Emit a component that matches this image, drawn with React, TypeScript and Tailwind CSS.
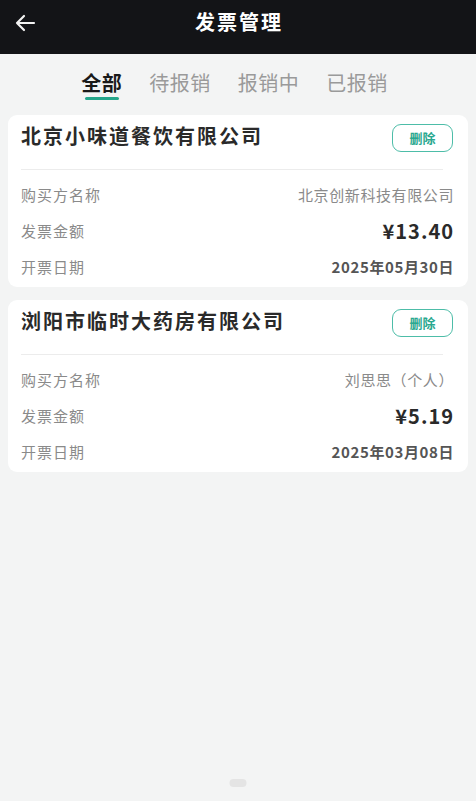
import React from "react";

const font = { fontFamily: '"Noto Sans CJK SC", "Noto Sans", sans-serif' };

type Invoice = { seller: string; buyer: string; amount: string; date: string };

const invoices: Invoice[] = [
  { seller: "北京小味道餐饮有限公司", buyer: "北京创新科技有限公司", amount: "¥13.40", date: "2025年05月30日" },
  { seller: "浏阳市临时大药房有限公司", buyer: "刘思思（个人）", amount: "¥5.19", date: "2025年03月08日" },
];

function Card({ inv }: { inv: Invoice }) {
  return (
    <div className="bg-white rounded-[9px] px-[13px] pt-[9px] pb-[9px]">
      <div className="flex items-start justify-between">
        <div className="text-[20px] font-bold text-[#2a2a2a] -mt-[2px] leading-[28px] tracking-[2px]">{inv.seller}</div>
        <button className="w-[61px] h-[28px] rounded-[9px] border-[1.5px] border-[#4dbda8] text-[#2aa88f] text-[13px] font-bold flex items-center justify-center mr-[2px]">
          删除
        </button>
      </div>
      <div className="h-px bg-[#ececec] mr-[12px] mt-[17px]" />
      <div className="flex flex-col pr-[1px] mt-[14px] gap-[14px]">
        <div className="flex items-center justify-between h-[22px]">
          <span className="text-[15px] text-[#8a8a8a] tracking-[1px]">购买方名称</span>
          <span className="text-[15px] text-[#8a8a8a] tracking-[0.6px]">{inv.buyer}</span>
        </div>
        <div className="flex items-center justify-between h-[22px]">
          <span className="text-[15px] text-[#8a8a8a] tracking-[1px]">发票金额</span>
          <span className="text-[20px] font-bold text-[#2a2a2a] tracking-[1px]">{inv.amount}</span>
        </div>
        <div className="flex items-center justify-between h-[22px]">
          <span className="text-[15px] text-[#8a8a8a] tracking-[1px]">开票日期</span>
          <span className="text-[15px] font-bold text-[#555] tracking-[0.6px]">{inv.date}</span>
        </div>
      </div>
    </div>
  );
}

export default function App() {
  return (
    <div style={font} className="w-[476px] h-[801px] bg-[#f3f4f4] flex flex-col relative overflow-hidden">
      <div className="h-[54px] bg-[#131417] flex items-center relative shrink-0">
        <svg className="absolute left-[14px] top-[13px]" width="22" height="20" viewBox="0 0 22 20" fill="none">
          <path d="M20 10H3M10 3L3 10L10 17" stroke="#f2f2f2" strokeWidth="2.2" strokeLinecap="round" strokeLinejoin="round" />
        </svg>
        <div className="flex-1 text-center text-white text-[20px] font-bold tracking-[2px] -mt-[10px] pl-[2px]">发票管理</div>
      </div>
      <div className="flex justify-center gap-[27px] pt-[16px] h-[61px] text-[20px] pr-[7px]">
        <div className="flex flex-col items-center">
          <span className="font-bold text-[#1a1a1a] leading-[26px] tracking-[0.5px]">全部</span>
          <div className="w-[34px] h-[3px] bg-[#25a68b] rounded-full mt-[1px]" />
        </div>
        <span className="text-[#9a9a9a] leading-[26px] tracking-[0.5px]">待报销</span>
        <span className="text-[#9a9a9a] leading-[26px] tracking-[0.5px]">报销中</span>
        <span className="text-[#9a9a9a] leading-[26px] tracking-[0.5px]">已报销</span>
      </div>
      <div className="flex flex-col gap-[13px] px-[8px]">
        {invoices.map((inv) => (
          <Card key={inv.seller} inv={inv} />
        ))}
      </div>
      <div className="absolute bottom-[14px] left-1/2 -translate-x-1/2 w-[17px] h-[8px] rounded-full bg-[#e4e4e4]" />
    </div>
  );
}
